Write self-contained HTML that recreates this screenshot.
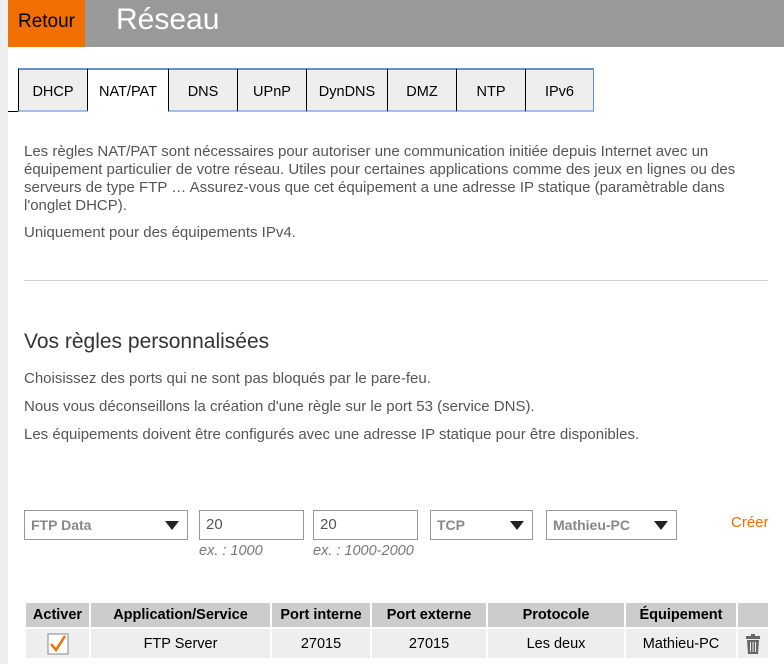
<!DOCTYPE html>
<html><head><meta charset="utf-8"><style>
body{margin:0;width:784px;height:664px;overflow:hidden;background:#fff;font-family:"Liberation Sans",sans-serif;position:relative}
.strip{position:absolute;left:0;top:0;width:8px;height:664px;background:#eee}
.hdr{position:absolute;left:8px;top:0;width:776px;height:47px;background:#999}
.ret{position:absolute;left:8px;top:0;width:77px;height:47px;background:#f16e00;color:#000;font-size:19px;line-height:44px;text-align:center}
.title{position:absolute;left:116px;top:3px;color:#fff;font-size:30px}
.tabs{position:absolute;left:18px;top:68px;height:44px;display:flex}
.tab{box-sizing:border-box;height:44px;background:#eee;border-left:1px solid #000;border-top:2px solid #6a8fd0;border-bottom:2px solid #9fbfee;font-size:14.5px;line-height:44px;text-align:center;color:#000}
.tab.act{background:#fff}
.tabline{position:absolute;left:8px;top:111px;width:10px;height:1px;background:#000}
.p{position:absolute;left:24px;color:#555;font-size:15px;line-height:18px;width:745px}
.hr{position:absolute;left:24px;top:280px;width:744px;height:1px;background:#ccc}
.box{position:absolute;top:510px;height:30px;box-sizing:border-box;border:1px solid #999;font-size:15px;line-height:28px;padding-left:6px;color:#555}
.sel{color:#888;font-weight:bold;font-size:14px}
.arr{position:absolute;right:8px;top:10px;width:0;height:0;border-left:7px solid transparent;border-right:7px solid transparent;border-top:9px solid #222}
.hint{position:absolute;top:543px;font-size:14.5px;font-style:italic;color:#777}
table{position:absolute;left:24px;top:601px;border-collapse:separate;border-spacing:2px;font-size:14.5px}
th{background:#ccc;height:24px;padding:0;font-weight:bold;color:#000}
td{background:#eee;height:29px;text-align:center;padding:0;color:#000}
</style></head><body>
<div class="strip"></div>
<div class="hdr"></div>
<div class="ret">Retour</div>
<div class="title">Réseau</div>
<div class="tabline"></div>
<div class="tabs">
<div class="tab" style="width:69px">DHCP</div>
<div class="tab act" style="width:81px;border-bottom-color:#fff">NAT/PAT</div>
<div class="tab" style="width:69px">DNS</div>
<div class="tab" style="width:69px">UPnP</div>
<div class="tab" style="width:81px">DynDNS</div>
<div class="tab" style="width:69px">DMZ</div>
<div class="tab" style="width:69px">NTP</div>
<div class="tab" style="width:69px;border-right:1px solid #6a8fd0">IPv6</div>
</div>
<div class="p" style="top:143px">Les règles NAT/PAT sont nécessaires pour autoriser une communication initiée depuis Internet avec un équipement particulier de votre réseau. Utiles pour certaines applications comme des jeux en lignes ou des serveurs de type FTP … Assurez-vous que cet équipement a une adresse IP statique (paramètrable dans l'onglet DHCP).</div>
<div class="p" style="top:224px">Uniquement pour des équipements IPv4.</div>
<div class="hr"></div>
<div class="p" style="top:330px;font-size:21px;line-height:24px;color:#333">Vos règles personnalisées</div>
<div class="p" style="top:370px">Choisissez des ports qui ne sont pas bloqués par le pare-feu.</div>
<div class="p" style="top:398px">Nous vous déconseillons la création d'une règle sur le port 53 (service DNS).</div>
<div class="p" style="top:426px">Les équipements doivent être configurés avec une adresse IP statique pour être disponibles.</div>
<div class="box sel" style="left:24px;width:164px">FTP Data<span class="arr"></span></div>
<div class="box" style="left:199px;width:105px">20</div>
<div class="box" style="left:313px;width:105px">20</div>
<div class="box sel" style="left:430px;width:103px">TCP<span class="arr"></span></div>
<div class="box sel" style="left:546px;width:131px">Mathieu-PC<span class="arr"></span></div>
<div style="position:absolute;left:731px;top:514px;color:#f16e00;font-size:15px">Créer</div>
<div class="hint" style="left:199px">ex. : 1000</div>
<div class="hint" style="left:313px">ex. : 1000-2000</div>
<table><tr><th style="width:63px">Activer</th><th style="width:179px">Application/Service</th><th style="width:98px">Port interne</th><th style="width:114px">Port externe</th><th style="width:136px">Protocole</th><th style="width:110px">Équipement</th><th style="width:30px"></th></tr>
<tr><td><svg width="22" height="22" viewBox="0 0 22 22" style="vertical-align:middle"><rect x="1" y="1" width="20" height="20" fill="#fff" stroke="#888"/><path d="M4 11 L9 17 L18 3" fill="none" stroke="#f16e00" stroke-width="2.5"/></svg></td><td>FTP Server</td><td>27015</td><td>27015</td><td>Les deux</td><td>Mathieu-PC</td><td><svg width="16" height="22" viewBox="0 0 16 22" style="vertical-align:middle"><rect x="6" y="1" width="4" height="2" fill="#666"/><rect x="1" y="3" width="14" height="3" fill="#666"/><path d="M2 7h12l-1 14H3z" fill="#666"/><path d="M5.5 9v10M8 9v10M10.5 9v10" stroke="#eee" stroke-width="1"/></svg></td></tr></table>
</body></html>
